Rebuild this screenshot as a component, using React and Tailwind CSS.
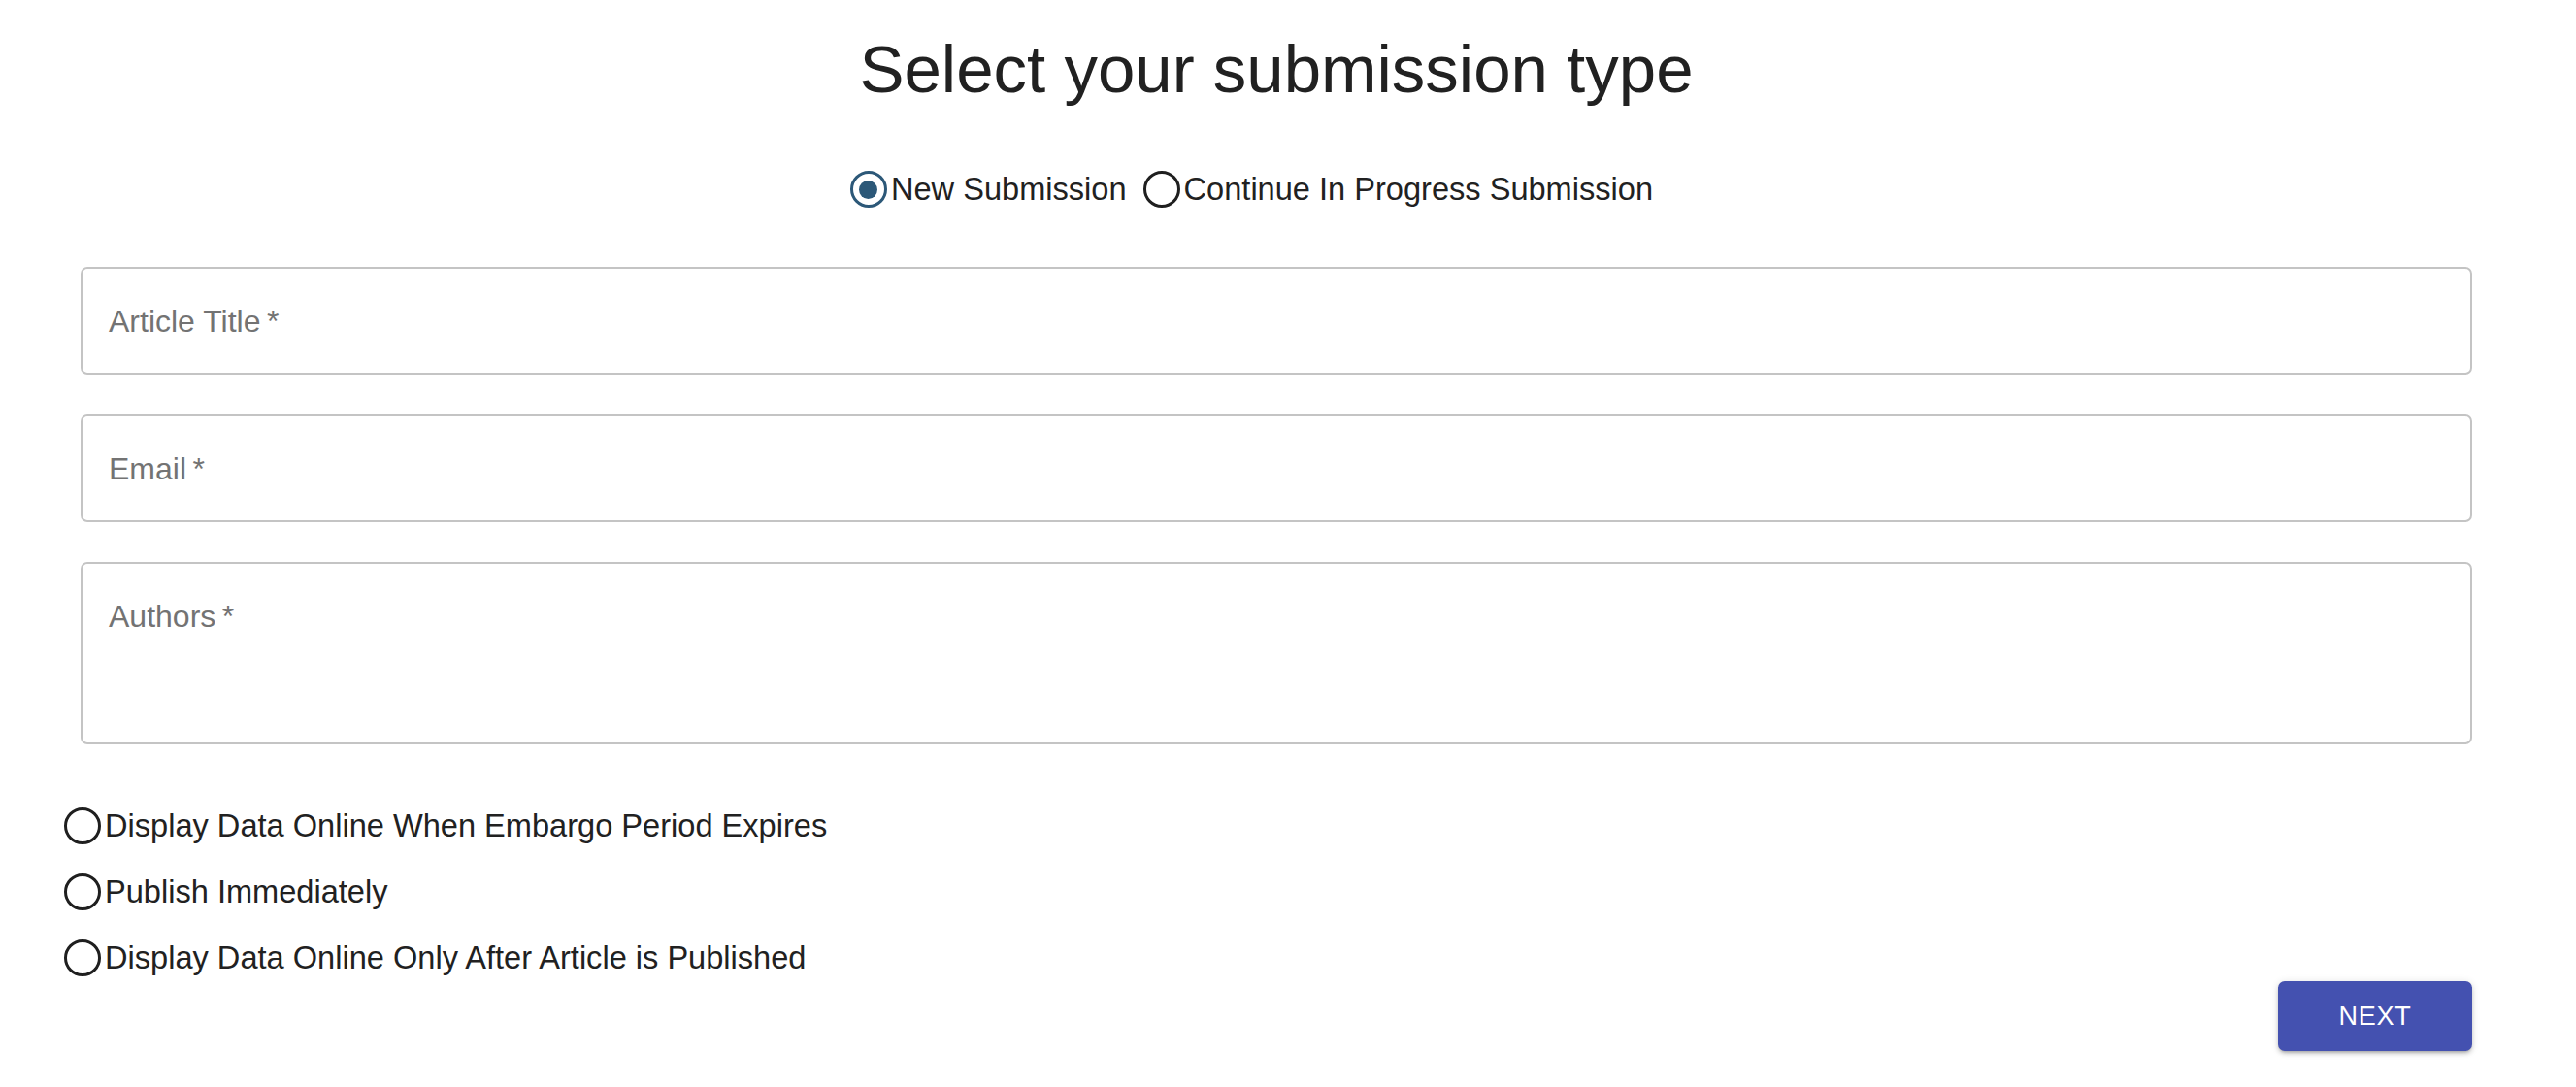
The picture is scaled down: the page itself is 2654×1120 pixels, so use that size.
import React, { useState } from "react";

const Radio = ({ checked }) => (
  <span
    className={
      "flex h-[38px] w-[38px] shrink-0 items-center justify-center rounded-full border-[3.8px] " +
      (checked ? "border-[#2c5878]" : "border-[#1f1f1f]")
    }
  >
    {checked && <span className="h-[19px] w-[19px] rounded-full bg-[#2c5878]" />}
  </span>
);

const Field = ({ label, tall }) => (
  <div
    className={
      "flex w-full rounded-[7px] border-2 border-[#c4c4c4] bg-white pl-[27px] " +
      (tall ? "h-[188px] items-start pt-[34px]" : "h-[111px] items-center")
    }
  >
    <span className="text-[32px] leading-[40px] text-[#737373]">
      {label}
      {"\u2009*"}
    </span>
  </div>
);

const App = () => {
  const [type, setType] = useState("new");
  const [display, setDisplay] = useState(null);

  const displayOptions = [
    "Display Data Online When Embargo Period Expires",
    "Publish Immediately",
    "Display Data Online Only After Article is Published",
  ];

  return (
    <div
      className="min-h-[1120px] w-full bg-white text-[#212121]"
      style={{ fontFamily: '"Liberation Sans", Arial, sans-serif' }}
    >
      <div className="pl-[83px] pr-[107px]">
        <h1 className="pt-[32px] text-center text-[69px] font-normal leading-[80px]">
          Select your submission type
        </h1>

        {/* submission type */}
        <div className="mt-[63px] flex h-[40px] items-center justify-center pr-[51px]">
          <button
            onClick={() => setType("new")}
            className="flex items-center gap-[4px]"
          >
            <Radio checked={type === "new"} />
            <span className="text-[32.6px] leading-[40px]">New Submission</span>
          </button>
          <button
            onClick={() => setType("continue")}
            className="ml-[17px] flex items-center gap-[4px]"
          >
            <Radio checked={type === "continue"} />
            <span className="text-[32.6px] leading-[40px]">
              Continue In Progress Submission
            </span>
          </button>
        </div>

        <div className="mt-[60px]">
          <Field label="Article Title" />
          <div className="mt-[41px]">
            <Field label="Email" />
          </div>
          <div className="mt-[41px]">
            <Field label="Authors" tall />
          </div>
        </div>

        <div className="-ml-[17px] mt-[64px] flex flex-col gap-[28px]">
          {displayOptions.map((opt, i) => (
            <button
              key={i}
              onClick={() => setDisplay(i)}
              className="flex h-[40px] items-center gap-[4px] self-start"
            >
              <Radio checked={display === i} />
              <span className="text-[32.6px] leading-[40px]">{opt}</span>
            </button>
          ))}
        </div>

        <div className="mt-[4px] flex justify-end">
          <button className="flex h-[72px] w-[200px] items-center justify-center rounded-[7px] bg-[#4451b0] text-[27px] tracking-[0.03em] text-white shadow-[0_3px_3px_-2px_rgba(0,0,0,0.2),0_3px_4px_0_rgba(0,0,0,0.14),0_1px_8px_0_rgba(0,0,0,0.12)]">
            NEXT
          </button>
        </div>
      </div>
    </div>
  );
};

export default App;
